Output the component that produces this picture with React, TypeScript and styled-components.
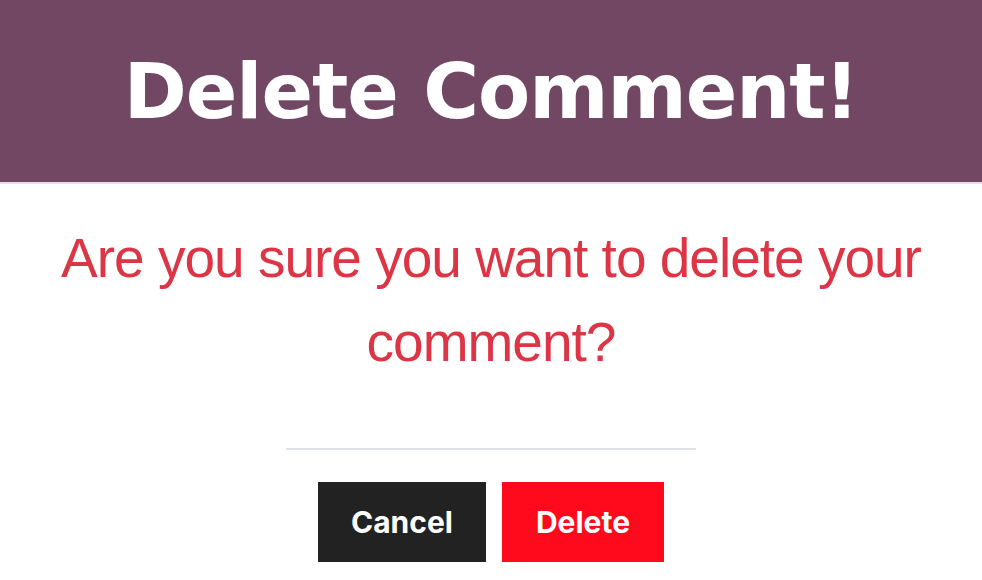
import React from "react";
import styled, { createGlobalStyle } from "styled-components";

const GlobalStyle = createGlobalStyle`
  html, body {
    margin: 0;
    padding: 0;
    background: #ffffff;
  }
  * {
    box-sizing: border-box;
  }
`;

const Modal = styled.div`
  width: 982px;
  height: 580px;
  display: flex;
  flex-direction: column;
  background: #ffffff;
  overflow: hidden;
`;

const Header = styled.header`
  height: 184px;
  background: #714763;
  border-bottom: 2px solid #dee2e6;
  display: flex;
  align-items: center;
  justify-content: center;
`;

const Title = styled.h1`
  margin: 0;
  font-family: "DejaVu Sans", sans-serif;
  font-weight: 700;
  font-size: 76px;
  letter-spacing: -1px;
  color: #ffffff;
`;

const Body = styled.div`
  display: flex;
  flex-direction: column;
  align-items: center;
  padding-top: 32px;
`;

const Message = styled.p`
  margin: 0;
  width: 920px;
  text-align: center;
  font-family: "Liberation Sans", Arial, sans-serif;
  font-weight: 400;
  font-size: 55px;
  line-height: 84px;
  letter-spacing: -1px;
  color: #dc3545;
`;

const Divider = styled.hr`
  width: 410px;
  margin: 64px 0 0;
  border: 0;
  border-top: 2px solid #dee2e6;
`;

const Actions = styled.div`
  display: flex;
  gap: 16px;
  margin-top: 32px;
`;

const Button = styled.button<{ $tone: "dark" | "danger" }>`
  height: 80px;
  padding: 0 ${(p) => (p.$tone === "dark" ? "33px" : "34px")};
  border: 0;
  border-radius: 0;
  font-family: Inter, sans-serif;
  font-weight: 700;
  font-size: 30px;
  color: #ffffff;
  background: ${(p) => (p.$tone === "dark" ? "#222222" : "#ff0a1c")};
  cursor: pointer;
`;

const App = () => (
  <>
    <GlobalStyle />
    <Modal>
      <Header>
        <Title>Delete Comment!</Title>
      </Header>
      <Body>
        <Message>Are you sure you want to delete your comment?</Message>
        <Divider />
        <Actions>
          <Button $tone="dark">Cancel</Button>
          <Button $tone="danger">Delete</Button>
        </Actions>
      </Body>
    </Modal>
  </>
);

export default App;
